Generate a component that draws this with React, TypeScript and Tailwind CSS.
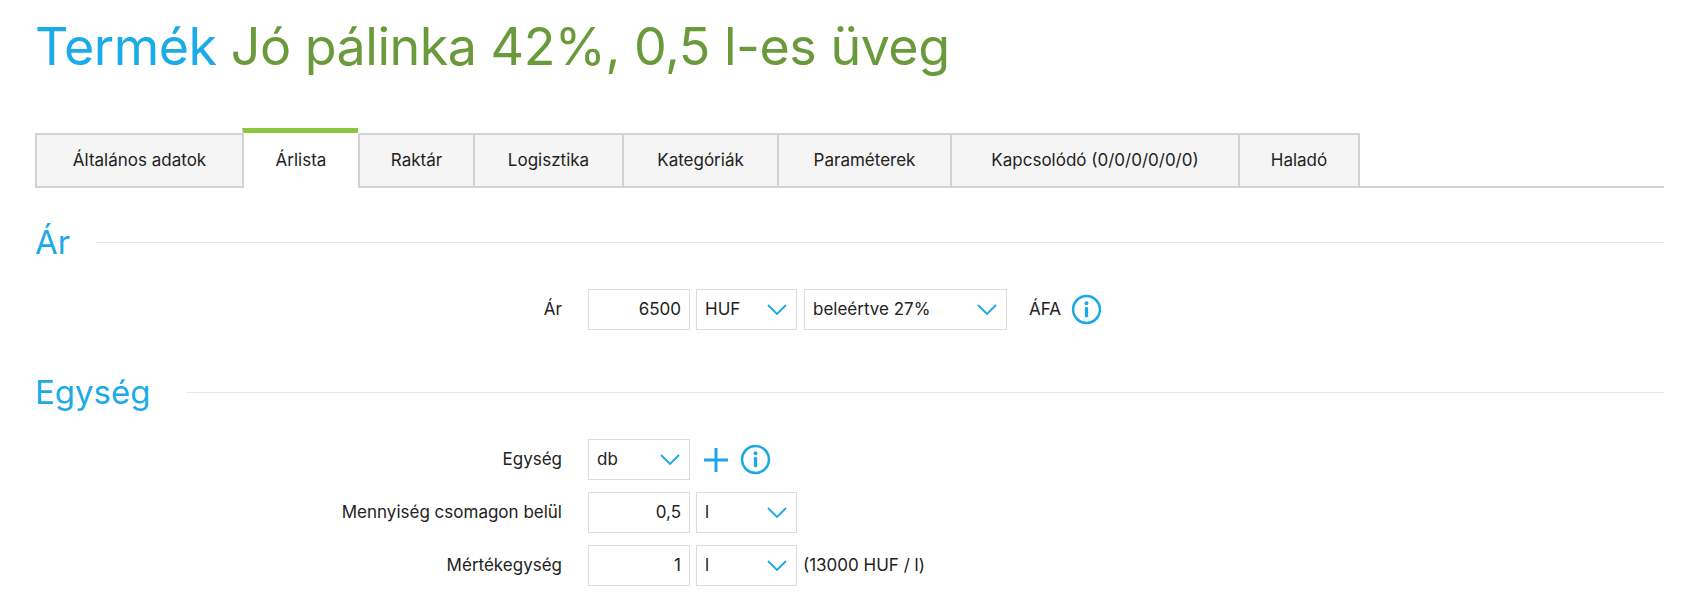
import React from "react";

const tabs = ["Általános adatok","Árlista","Raktár","Logisztika","Kategóriák","Paraméterek","Kapcsolódó (0/0/0/0/0/0)","Haladó"];
const widths = [207,116,115,149,155,173,288,122];

function Chevron() {
  return (
    <svg width="22" height="14" viewBox="0 0 22 14" fill="none" stroke="#1aa9e6" strokeWidth="1.8"><path d="M2 2l9 9 9-9"/></svg>
  );
}
function Info() {
  return (
    <svg width="31" height="31" viewBox="0 0 30 30" fill="none"><circle cx="15" cy="15" r="13" stroke="#1aa9e6" strokeWidth="2.4"/><circle cx="15" cy="9" r="1.9" fill="#1aa9e6"/><rect x="13.4" y="12.5" width="3.2" height="10" rx="1.2" fill="#1aa9e6"/></svg>
  );
}
function Input({ v }: { v: string }) {
  return <div className="w-[102px] h-[41px] border border-[#dcdcdc] flex items-center justify-end px-2 text-[17px]">{v}</div>;
}
function Select({ v, w }: { v: string; w: string }) {
  return <div className={`${w} h-[41px] border border-[#dcdcdc] flex items-center justify-between pl-2 pr-2 text-[17px]`}><span>{v}</span><Chevron /></div>;
}
function Section({ title, lineClass }: { title: string; lineClass: string }) {
  return (
    <div className="flex items-center">
      <div className="text-[33px] text-[#1aabe8] leading-none">{title}</div>
      <div className={`flex-1 h-px bg-[#e8e8e8] ${lineClass}`} />
    </div>
  );
}
function Label({ t }: { t: string }) {
  return <div className="w-[553px] text-right pr-[26px] text-[17px]">{t}</div>;
}

export default function App() {
  return (
    <div className="w-[1691px] h-[606px] bg-white text-[#222]" style={{ fontFamily: "Inter, 'Noto Sans', sans-serif" }}>
      <div className="pl-[35px] pr-[27px] pt-[15px]">
        <h1 className="text-[52px] leading-[64px] tracking-[-0.5px]">
          <span className="text-[#1aabe8]">Termék</span> <span className="text-[#6b9a3c]">Jó pálinka 42%, 0,5 l-es üveg</span>
        </h1>
        <div className="mt-[54px] flex border-b-2 border-[#d2d2d2]">
          {tabs.map((t, i) => (
            <div key={t} style={{ width: widths[i] }} className={`h-[53px] flex items-center justify-center text-[17px] border-l-2 border-[#d2d2d2] ${i === tabs.length - 1 ? "border-r-2" : ""} ${i === 1 ? "bg-white border-t-[5px] border-t-[#8cc63f] -mb-[2px] h-[55px] mt-[-5px] h-[60px] pt-0" : "bg-[#f5f5f5] border-t-2 border-t-[#d2d2d2]"}`}>{t}</div>
          ))}
        </div>
        <div className="mt-[38px]">
          <Section title="Ár" lineClass="ml-[26px]" />
        </div>
        <div className="mt-[30px] flex items-center">
          <Label t="Ár" />
          <Input v="6500" />
          <div className="w-[6px]" />
          <Select v="HUF" w="w-[101px]" />
          <div className="w-[7px]" />
          <Select v="beleértve 27%" w="w-[203px]" />
          <span className="ml-[22px] text-[17px] mr-[10px]">ÁFA</span>
          <Info />
        </div>
        <div className="mt-[46px]">
          <Section title="Egység" lineClass="ml-[36px]" />
        </div>
        <div className="mt-[30px] flex items-center">
          <Label t="Egység" />
          <Select v="db" w="w-[102px]" />
          <svg className="ml-[12px]" width="28" height="28" viewBox="0 0 28 28" stroke="#1aa9e6" strokeWidth="3"><path d="M14 2v24M2 14h24"/></svg>
          <div className="ml-[10px]"><Info /></div>
        </div>
        <div className="mt-[12px] flex items-center">
          <Label t="Mennyiség csomagon belül" />
          <Input v="0,5" />
          <div className="w-[6px]" />
          <Select v="l" w="w-[101px]" />
        </div>
        <div className="mt-[12px] flex items-center">
          <Label t="Mértékegység" />
          <Input v="1" />
          <div className="w-[6px]" />
          <Select v="l" w="w-[101px]" />
          <span className="ml-[6px] text-[17px]">(13000 HUF / l)</span>
        </div>
      </div>
    </div>
  );
}
